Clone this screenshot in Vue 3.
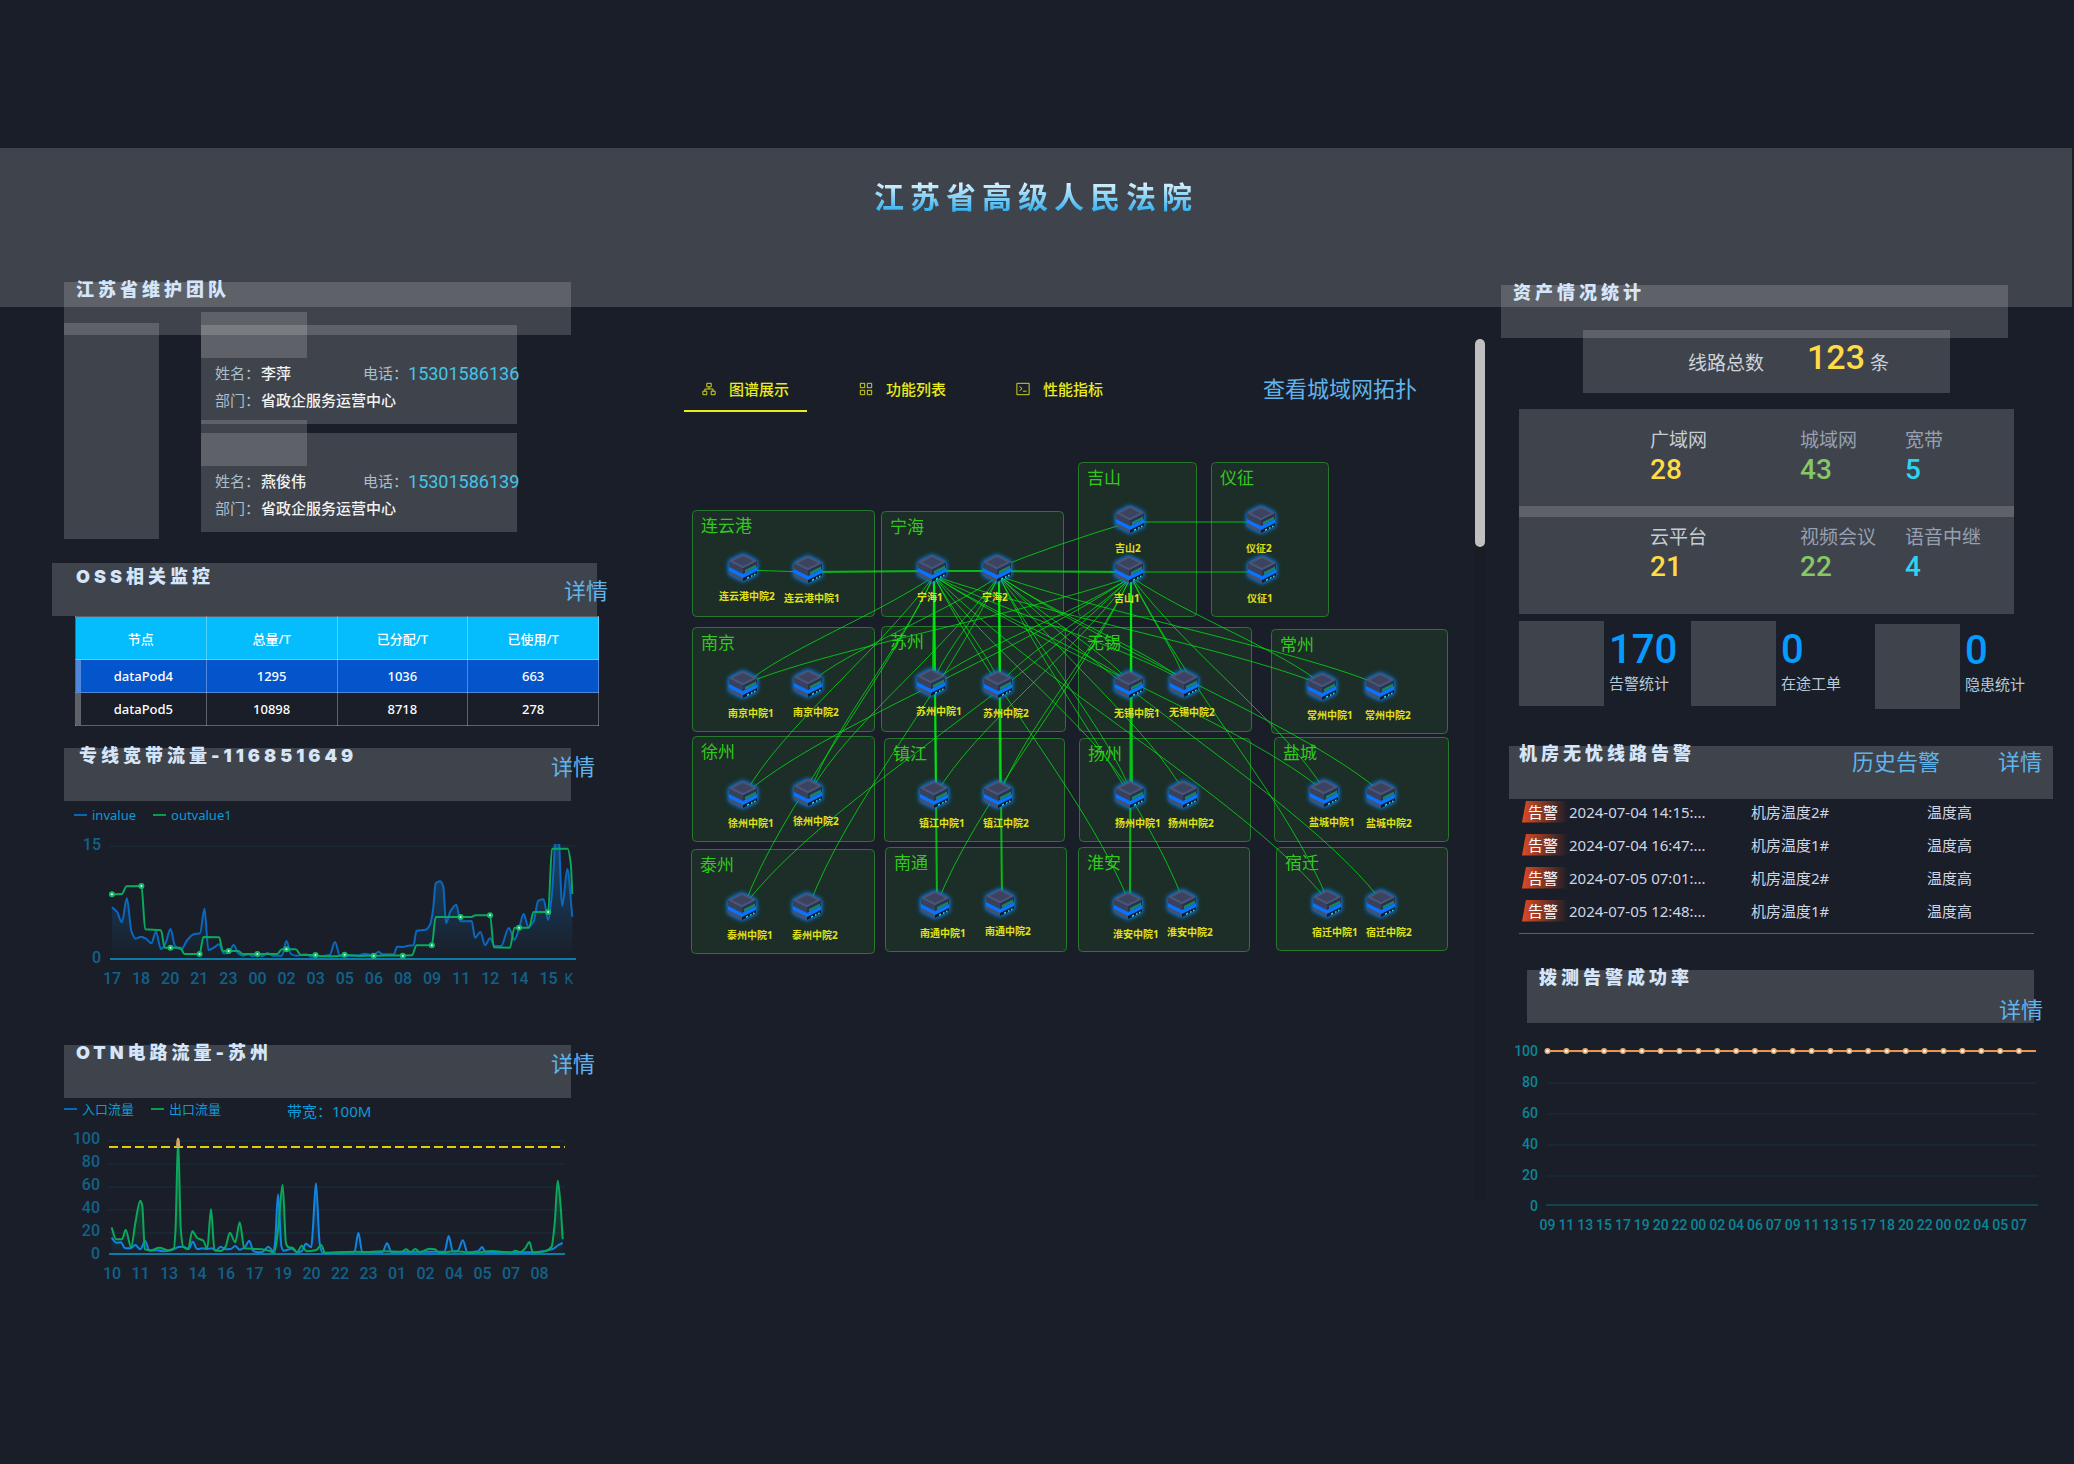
<script setup>
import { ref } from 'vue'

const activeTab = ref('graph')
const tabs = [
  { key: 'graph', label: '图谱展示' },
  { key: 'list', label: '功能列表' },
  { key: 'perf', label: '性能指标' },
]

const members = [
  { name: '李萍', phone: '15301586136', dept: '省政企服务运营中心' },
  { name: '燕俊伟', phone: '15301586139', dept: '省政企服务运营中心' },
]

const pods = [
  ['dataPod4', '1295', '1036', '663'],
  ['dataPod5', '10898', '8718', '278'],
]

const assets = [
  [
    { label: '广域网', value: 28 },
    { label: '城域网', value: 43 },
    { label: '宽带', value: 5 },
  ],
  [
    { label: '云平台', value: 21 },
    { label: '视频会议', value: 22 },
    { label: '语音中继', value: 4 },
  ],
]

const counters = [
  { label: '告警统计', value: 170 },
  { label: '在途工单', value: 0 },
  { label: '隐患统计', value: 0 },
]

const alarms = [
  { time: '2024-07-04 14:15:...', device: '机房温度2#', reason: '温度高' },
  { time: '2024-07-04 16:47:...', device: '机房温度1#', reason: '温度高' },
  { time: '2024-07-05 07:01:...', device: '机房温度2#', reason: '温度高' },
  { time: '2024-07-05 12:48:...', device: '机房温度1#', reason: '温度高' },
]

/* ---------- charts ---------- */

// Monotone cubic interpolation through the points
function smooth(pts) {
  const n = pts.length
  const d = []
  for (let i = 0; i < n - 1; i++) {
    d.push((pts[i + 1][1] - pts[i][1]) / (pts[i + 1][0] - pts[i][0]))
  }
  const m = pts.map((_, i) => {
    if (i === 0) return d[0]
    if (i === n - 1) return d[n - 2]
    if (d[i - 1] * d[i] <= 0) return 0
    return (2 * d[i - 1] * d[i]) / (d[i - 1] + d[i])
  })
  let path = `M${pts[0][0].toFixed(1)},${pts[0][1].toFixed(1)}`
  for (let i = 0; i < n - 1; i++) {
    const h = (pts[i + 1][0] - pts[i][0]) / 3
    const c = [
      pts[i][0] + h, pts[i][1] + m[i] * h,
      pts[i + 1][0] - h, pts[i + 1][1] - m[i + 1] * h,
      pts[i + 1][0], pts[i + 1][1],
    ]
    path += 'C' + c.map((v) => v.toFixed(1)).join(',')
  }
  return path
}

const KX = 2.6133
const place = (pts, dx, dy) => pts.map(([x, y]) => [x / KX + dx, y / 3 + dy])
const area = (path, pts, base) =>
  `${path}L${pts[pts.length - 1][0].toFixed(1)},${base}L${pts[0][0].toFixed(1)},${base}Z`

const inRaw = [[188,322],[201,335],[214,367],[227,295],[239,395],[250,416],[264,410],[278,417],[291,430],[303,395],[316,447],[328,430],[341,387],[353,438],[369,448],[385,420],[403,402],[418,400],[430,326],[440,450],[455,442],[468,433],[480,460],[493,458],[506,435],[518,460],[530,467],[545,463],[556,469],[568,462],[582,469],[594,459],[610,467],[632,467],[644,423],[656,462],[670,467],[695,463],[708,470],[722,469],[757,465],[771,426],[784,468],[800,468],[835,466],[848,461],[862,464],[872,465],[885,455],[895,463],[925,463],[933,440],[948,441],[962,437],[976,436],[984,392],[1008,389],[1020,372],[1027,330],[1034,250],[1046,244],[1054,260],[1061,370],[1072,335],[1088,314],[1099,364],[1128,363],[1137,413],[1151,396],[1163,436],[1176,415],[1188,438],[1205,438],[1225,384],[1240,419],[1252,385],[1264,342],[1276,380],[1290,365],[1302,302],[1316,298],[1328,360],[1338,280],[1352,40],[1365,318],[1378,207],[1391,350]]
const outRaw = [[188,283],[214,282],[226,259],[265,258],[275,388],[316,391],[326,443],[366,443],[378,462],[417,462],[427,411],[468,412],[478,453],[518,453],[530,462],[620,462],[632,448],[668,448],[682,465],[720,465],[735,469],[775,469],[796,464],[835,468],[875,467],[972,466],[984,436],[1024,436],[1034,351],[1127,351],[1138,346],[1176,346],[1186,442],[1228,443],[1240,383],[1278,383],[1290,336],[1328,336],[1338,146],[1379,146],[1387,190],[1391,282]]
const markRaw = [[188,283],[265,258],[341,443],[417,462],[493,453],[568,462],[644,448],[720,465],[796,464],[872,467],[948,467],[1024,436],[1099,351],[1176,346],[1252,383],[1328,336]]

const inPts = place(inRaw, -12, -22)
const outPts = place(outRaw, -12, -22)
const lineMarks = place(markRaw, -12, -22)
const inPath = smooth(inPts)
const outPath = smooth(outPts)
const lineHours = ['17','18','20','21','23','00','02','03','05','06','08','09','11','12','14','15']

const otnInRaw = [[187,623],[200,638],[212,637],[222,655],[237,655],[249,645],[262,658],[275,633],[286,662],[305,661],[322,664],[345,660],[362,651],[376,650],[388,658],[399,635],[411,657],[425,655],[437,657],[449,655],[460,662],[472,650],[485,658],[500,656],[510,648],[522,659],[535,652],[547,632],[558,664],[580,667],[597,650],[610,664],[614,640],[622,493],[631,650],[637,662],[658,656],[672,667],[684,664],[695,641],[709,652],[713,600],[721,460],[731,640],[738,668],[760,668],[822,665],[832,608],[842,665],[895,666],[907,640],[918,666],[1030,665],[1057,665],[1068,618],[1079,665],[1092,662],[1105,631],[1117,667],[1145,664],[1155,651],[1165,667],[1260,667],[1300,666],[1340,657],[1355,645],[1366,639]]
const otnOutRaw = [[187,592],[199,628],[214,628],[224,600],[238,652],[249,580],[262,512],[267,525],[274,658],[290,661],[312,653],[335,661],[350,655],[354,600],[361,328],[368,600],[374,650],[387,657],[398,604],[411,624],[427,632],[437,657],[447,538],[456,660],[472,663],[485,650],[496,608],[510,637],[522,577],[534,655],[560,657],[580,658],[600,663],[612,668],[622,600],[634,464],[643,640],[650,652],[660,653],[672,667],[684,647],[696,664],[722,660],[735,645],[745,669],[820,665],[840,666],[900,664],[945,665],[957,658],[968,667],[981,657],[993,667],[1018,656],[1032,658],[1045,669],[1080,664],[1105,665],[1120,669],[1145,667],[1180,663],[1230,668],[1242,662],[1255,667],[1268,655],[1279,636],[1288,668],[1320,664],[1337,650],[1345,580],[1353,452],[1360,520],[1366,628]]
const otnInPts = place(otnInRaw, -12, -86)
const otnOutPts = place(otnOutRaw, -12, -86)
const otnIn = smooth(otnInPts)
const otnOut = smooth(otnOutPts)
const otnHours = ['10','11','13','14','16','17','19','20','22','23','01','02','04','05','07','08']

const probeHours = ['09','11','13','15','17','19','20','22','00','02','04','06','07','09','11','13','15','17','18','20','22','00','02','04','05','07']
const levels = [100, 80, 60, 40, 20, 0]

/* ---------- topology ---------- */

const groups = [
  ['连云港', 8, 98, 183, 107], ['宁海', 197, 99, 183, 106], ['吉山', 394, 50, 119, 155], ['仪征', 527, 50, 118, 155],
  ['南京', 8, 215, 183, 105], ['苏州', 197, 214, 185, 106], ['无锡', 394, 215, 174, 105], ['常州', 587, 217, 177, 105],
  ['徐州', 8, 324, 183, 106], ['镇江', 200, 326, 181, 104], ['扬州', 395, 326, 172, 104], ['盐城', 590, 325, 175, 105],
  ['泰州', 7, 437, 184, 105], ['南通', 201, 435, 182, 105], ['淮安', 394, 435, 172, 105], ['宿迁', 592, 435, 172, 104],
]

const nodes = {
  连云港中院2: [59, 155], 连云港中院1: [124, 157], 宁海1: [248, 156], 宁海2: [313, 156],
  吉山2: [446, 107], 吉山1: [445, 157], 仪征2: [577, 107], 仪征1: [578, 157],
  南京中院1: [59, 272], 南京中院2: [124, 271], 苏州中院1: [247, 270], 苏州中院2: [314, 272],
  无锡中院1: [445, 272], 无锡中院2: [500, 271], 常州中院1: [638, 274], 常州中院2: [696, 274],
  徐州中院1: [59, 382], 徐州中院2: [124, 380], 镇江中院1: [250, 382], 镇江中院2: [314, 382],
  扬州中院1: [446, 382], 扬州中院2: [499, 382], 盐城中院1: [640, 381], 盐城中院2: [697, 382],
  泰州中院1: [58, 494], 泰州中院2: [123, 494], 南通中院1: [251, 492], 南通中院2: [316, 490],
  淮安中院1: [444, 493], 淮安中院2: [498, 491], 宿迁中院1: [643, 491], 宿迁中院2: [697, 491],
}
const nodeList = Object.entries(nodes).map(([name, [x, y]]) => ({
  name, x, y, lx: x - (name.startsWith('连云港') ? 24 : 15),
}))

const straight = [
  ['连云港中院2', '连云港中院1', 1], ['连云港中院1', '宁海1', 2], ['宁海1', '宁海2', 2],
  ['宁海2', '吉山1', 2], ['吉山2', '仪征2', 1], ['吉山1', '仪征1', 1],
]
const fan = {
  宁海1: ['南京中院1', '徐州中院1', '徐州中院2', '泰州中院1', '苏州中院1', '苏州中院2', '镇江中院1', '南通中院1', '无锡中院1', '无锡中院2', '常州中院1', '扬州中院1', '盐城中院1', '宿迁中院1', '淮安中院1'],
  宁海2: ['南京中院2', '徐州中院2', '泰州中院2', '苏州中院1', '苏州中院2', '镇江中院2', '南通中院2', '无锡中院1', '无锡中院2', '常州中院2', '扬州中院1', '扬州中院2', '盐城中院2', '宿迁中院2', '淮安中院2'],
  吉山1: ['南京中院1', '苏州中院1', '苏州中院2', '徐州中院1', '泰州中院1', '镇江中院1', '镇江中院2', '南通中院1', '无锡中院1', '无锡中院2', '常州中院1', '扬州中院1', '盐城中院1', '宿迁中院1', '淮安中院1'],
}
function bend(a, b) {
  const [x1, y1] = [a[0] + 2, a[1] + 8]
  const [x2, y2] = [b[0] + 2, b[1]]
  const dx = x2 - x1
  const dy = y2 - y1
  const r = (v) => Math.round(v)
  return `M${x1},${y1}C${r(x1 + dx * 0.3)},${r(y1 + dy * 0.36)} ${r(x2 - dx * 0.2)},${r(y2 - dy * 0.31)} ${x2},${y2}`
}
const links = Object.entries(fan).flatMap(([from, list]) =>
  list.map((to) => ({
    id: from + to,
    d: bend(nodes[from], nodes[to]),
    w: Math.abs(nodes[from][0] - nodes[to][0]) < 6 ? 2 : 1,
  })),
)
</script>

<template>
  <div class="page">
    <header class="banner">
      <h1>江苏省高级人民法院</h1>
    </header>

    <main class="board">
      <div class="col left">
        <section>
          <div class="head inset"><h2>江苏省维护团队</h2></div>
          <div class="team">
            <div class="photos"><i></i><i></i></div>
            <div class="cards">
              <article v-for="m in members" :key="m.phone" class="card">
                <span class="tag"></span>
                <div class="info">
                  <p>姓名：<b>{{ m.name }}</b></p>
                  <p>电话：<em>{{ m.phone }}</em></p>
                </div>
                <div class="info"><p>部门：<b>{{ m.dept }}</b></p></div>
              </article>
            </div>
          </div>
        </section>

        <section class="oss">
          <div class="head"><h2>OSS相关监控</h2><a href="#oss">详情</a></div>
          <table>
            <thead>
              <tr><th>节点</th><th>总量/T</th><th>已分配/T</th><th>已使用/T</th></tr>
            </thead>
            <tbody>
              <tr v-for="row in pods" :key="row[0]"><td v-for="c in row" :key="c">{{ c }}</td></tr>
            </tbody>
          </table>
        </section>

        <section class="flow">
          <div class="head inset"><h2>专线宽带流量-116851649</h2><a href="#flow">详情</a></div>
          <div class="legend wide">
            <span class="key in">invalue</span><span class="key out">outvalue1</span>
          </div>
          <svg class="chart" viewBox="0 0 560 168">
            <defs>
              <linearGradient id="fillBlue" x1="0" y1="0" x2="0" y2="1">
                <stop offset="0" stop-color="#0f86e0" stop-opacity=".5" />
                <stop offset="1" stop-color="#0f86e0" stop-opacity="0" />
              </linearGradient>
              <clipPath id="plotClip"><rect x="50" y="22" width="480" height="118" /></clipPath>
            </defs>
            <line class="grid" x1="58" x2="523" y1="24" y2="24" />
            <g clip-path="url(#plotClip)">
              <path :d="area(inPath, inPts, 137)" fill="url(#fillBlue)" />
              <path :d="inPath" class="curve blue" />
              <path :d="outPath" class="curve green" />
            </g>
            <line class="axis" x1="58" x2="524" y1="137" y2="137" />
            <g v-for="(p, i) in lineMarks" :key="i">
              <circle :cx="p[0]" :cy="p[1]" r="3" fill="#12b968" />
              <circle :cx="p[0]" :cy="p[1]" r="1" fill="#eafff2" />
            </g>
            <g class="ticks">
              <text x="49" y="28" text-anchor="end">15</text>
              <text x="49" y="141" text-anchor="end">0</text>
              <text v-for="(h, i) in lineHours" :key="i" :x="60 + i * 29.1" y="162" text-anchor="middle">{{ h }}</text>
              <text x="517" y="162" text-anchor="middle" class="unit">K</text>
            </g>
          </svg>
        </section>

        <section class="otn">
          <div class="head inset"><h2>OTN电路流量-苏州</h2><a href="#otn">详情</a></div>
          <div class="legend">
            <span class="key in">入口流量</span><span class="key out">出口流量</span>
            <span class="bandwidth">带宽：100M</span>
          </div>
          <svg class="chart" viewBox="0 0 560 170">
            <defs>
              <clipPath id="overClip"><rect x="50" y="20" width="480" height="11" /></clipPath>
              <linearGradient id="fillGreen" x1="0" y1="0" x2="0" y2="1">
                <stop offset="0" stop-color="#0aa85c" stop-opacity=".6" />
                <stop offset="1" stop-color="#0aa85c" stop-opacity="0" />
              </linearGradient>
            </defs>
            <line v-for="i in 5" :key="i" class="grid" x1="57" x2="513" :y1="2 + i * 23" :y2="2 + i * 23" />
            <line class="axis" x1="57" x2="513" y1="138" y2="138" />
            <path :d="area(otnIn, otnInPts, 138)" fill="url(#fillBlue)" />
            <path :d="area(otnOut, otnOutPts, 138)" fill="url(#fillGreen)" />
            <path :d="otnIn" class="curve bright" />
            <path :d="otnOut" class="curve green" />
            <line x1="57" x2="513" y1="31" y2="31" stroke="#e6cb0a" stroke-width="2" stroke-dasharray="9 4" />
            <path :d="otnOut" clip-path="url(#overClip)" fill="none" stroke="#d9a566" stroke-width="3" />
            <g class="ticks">
              <text v-for="(l, i) in levels" :key="l" x="48" :y="28 + i * 23" text-anchor="end">{{ l }}</text>
              <text v-for="(h, i) in otnHours" :key="i" :x="60 + i * 28.5" y="163" text-anchor="middle">{{ h }}</text>
            </g>
          </svg>
        </section>
      </div>

      <div class="col center">
        <div class="pane">
          <nav class="tabs">
            <button v-for="t in tabs" :key="t.key" type="button" :class="{ on: activeTab === t.key }" @click="activeTab = t.key">
              <svg v-if="t.key === 'graph'" viewBox="0 0 16 16"><path d="M5.500 1.500h5v4h-5zM1 10.500h4.500v4H1zM10.500 10.500H15v4h-4.500zM8 5.500V8M3.300 10.500V8h9.400v2.500" /></svg>
              <svg v-else-if="t.key === 'list'" viewBox="0 0 16 16"><path d="M1.500 1.500h5v5h-5zM9.500 1.500h5v5h-5zM1.500 9.500h5v5h-5zM9.500 9.500h5v5h-5z" /></svg>
              <svg v-else viewBox="0 0 16 16"><path d="M1 1.500h14v13H1zM4 5l3 2.500L4 10M8 10.500h4" /></svg>
              {{ t.label }}
            </button>
            <a href="#topology">查看城域网拓扑</a>
          </nav>

          <svg class="topology" viewBox="0 0 791 560">
            <defs>
              <symbol id="server" viewBox="-16 -15 32 30" overflow="visible">
                <path d="M-14-6 0 1V8L-14 1Z" fill="#3a4059" />
                <path d="M14-6 0 1V8L14 1Z" fill="#2c3149" />
                <path d="M0-13 14-6 0 1-14-6Z" fill="#4d5472" />
                <path d="M0-11 10-6 0-1-10-6Z" fill="#3c4360" />
                <path d="M2 3 13-2.500v3L2 6Z" fill="#178463" />
                <path d="M-14 0 0 7 14 0V4L0 11-14 4Z" fill="#0873ff" />
                <path d="M-14 4 0 11V14L-14 7Z" fill="#4a4f66" />
                <path d="M0 11 14 4V7L0 14Z" fill="#0f1a2c" />
                <path d="M4 10.500l2-1v1.500l-2 1zM8 8.500l1.500-.8v1.600l-1.500.7zM11 7l1.500-.8v1.500L11 8.500z" fill="#35e0d8" />
              </symbol>
            </defs>
            <g v-for="g in groups" :key="g[0]">
              <rect class="zone" :x="g[1] + 0.5" :y="g[2] + 0.5" :width="g[3] - 1" :height="g[4] - 1" rx="4" />
              <text class="zone-name" :x="g[1] + 9" :y="g[2] + 22">{{ g[0] }}</text>
            </g>
            <line
              v-for="s in straight" :key="s[0] + s[1]" class="link"
              :x1="nodes[s[0]][0]" :y1="nodes[s[0]][1] + 3" :x2="nodes[s[1]][0]" :y2="nodes[s[1]][1] + 3" :stroke-width="s[2]"
            />
            <path class="link" d="M313,156Q370,133 446,110" stroke-width="1" />
            <path v-for="l in links" :key="l.id" class="link" :d="l.d" :stroke-width="l.w" />
            <g v-for="n in nodeList" :key="n.name">
              <use class="server" href="#server" :x="n.x - 16" :y="n.y - 15" width="32" height="30" />
              <text class="node-name" :x="n.lx" :y="n.y + 33">{{ n.name }}</text>
            </g>
          </svg>
        </div>
        <div class="track"><i></i></div>
      </div>

      <div class="col right">
        <section>
          <div class="head"><h2>资产情况统计</h2></div>
          <div class="total">线路总数<strong>123</strong>条</div>
          <div class="assets">
            <dl v-for="(row, i) in assets" :key="i">
              <div v-for="a in row" :key="a.label"><dt>{{ a.label }}</dt><dd>{{ a.value }}</dd></div>
            </dl>
          </div>
          <div class="counters">
            <div v-for="c in counters" :key="c.label" class="counter">
              <i></i>
              <p><strong>{{ c.value }}</strong>{{ c.label }}</p>
            </div>
          </div>
        </section>

        <section class="alarm">
          <div class="head">
            <h2>机房无忧线路告警</h2>
            <a href="#history" class="history">历史告警</a><a href="#alarm">详情</a>
          </div>
          <ul>
            <li v-for="a in alarms" :key="a.time">
              <span class="badge">告警</span><span>{{ a.time }}</span><span>{{ a.device }}</span><span>{{ a.reason }}</span>
            </li>
          </ul>
        </section>

        <section class="probe">
          <div class="head"><h2>拨测告警成功率</h2><a href="#probe">详情</a></div>
          <svg class="chart" viewBox="0 0 560 213">
            <line v-for="i in 5" :key="i" class="grid" x1="46" x2="536" :y1="-2 + i * 31" :y2="-2 + i * 31" />
            <line class="axis teal" x1="45" x2="537" y1="182" y2="182" />
            <line x1="46" x2="535" y1="28" y2="28" stroke="#ee9347" stroke-width="2" />
            <g v-for="(h, i) in probeHours" :key="i">
              <circle :cx="46.500 + i * 18.860" cy="28" r="3" fill="#e0ac78" />
              <circle :cx="46.500 + i * 18.860" cy="28" r="1.500" fill="#fff6ea" />
            </g>
            <g class="ticks teal">
              <text v-for="(l, i) in levels" :key="l" x="37" :y="33 + i * 31" text-anchor="end">{{ l }}</text>
              <text v-for="(h, i) in probeHours" :key="i" :x="46.500 + i * 18.860" y="207" text-anchor="middle">{{ h }}</text>
            </g>
          </svg>
        </section>
      </div>
    </main>
  </div>
</template>

<style>
html,
body {
  margin: 0;
  background: #1a1e28;
}
</style>

<style scoped>
.page {
  --veil: rgba(255, 255, 255, 0.165);
  --link: #60b4ec;
  --digits: "Liberation Sans Narrow", Roboto, sans-serif;
  min-height: 100vh;
  box-sizing: border-box;
  padding-top: 148px;
  overflow: hidden;
  background: #1a1e28;
  color: #fff;
  font-family: "Noto Sans", "Noto Sans CJK SC", sans-serif;
  font-size: 15px;
}
h1, h2, p, ul, dl, dd { margin: 0; padding: 0; }
a { color: var(--link); text-decoration: none; font-size: 22px; line-height: 24px; white-space: nowrap; }

.banner {
  height: 159px;
  margin-right: 2px;
  background: var(--veil);
  text-align: center;
}
h1 {
  display: inline-block;
  padding-top: 27px;
  font-size: 30px;
  line-height: 44px;
  font-weight: 700;
  letter-spacing: 6px;
  background: linear-gradient(#fff 40%, #2fb0f0 90%);
  background-clip: text;
  color: transparent;
}

.board {
  display: grid;
  grid-template-columns: 684px minmax(0, 1fr) 573px;
  margin-top: -25px;
}
.left { padding-left: 52px; }

.head {
  display: flex;
  align-items: flex-start;
  width: 507px;
  height: 53px;
  background: var(--veil);
}
.head.inset { margin-left: 12px; }
.head h2 {
  flex: 1;
  margin-top: -1px;
  padding-left: 12px;
  font-family: Inter, "Noto Sans CJK SC", sans-serif;
  font-size: 18px;
  line-height: 18px;
  font-weight: 900;
  letter-spacing: 4px;
  color: #d5e6fb;
  white-space: nowrap;
}
.head a { margin: 6px -24px 0 0; }

.team { display: flex; gap: 42px; margin: -12px 0 0 12px; }
.photos { width: 95px; }
.photos i { display: block; height: 108px; background: var(--veil); }
.cards { display: flex; flex-direction: column; gap: 9px; padding-top: 2px; }
.card {
  display: flex;
  flex-direction: column;
  width: 316px;
  height: 99px;
  background: var(--veil);
}
.tag { width: 106px; height: 46px; margin: -13px 0 2px; background: var(--veil); }
.info {
  display: grid;
  grid-template-columns: 148px auto;
  padding-left: 14px;
  line-height: 27px;
  color: #a9bfca;
  white-space: nowrap;
}
.info p { display: flex; align-items: center; }
.info b { margin-left: 1px; color: #f2f2f2; font-weight: 500; }
.info em { font-family: var(--digits); font-style: normal; font-size: 18px; color: #47c3e6; }

.oss { margin-top: 24px; }
.oss .head { width: 545px; }
.oss h2 { padding: 6px 0 0 24px; }
.oss .head a { margin: 15px -11px 0 0; }
table {
  width: 524px;
  margin-left: 23px;
  border-collapse: collapse;
  table-layout: fixed;
  font-size: 13px;
  text-align: center;
}
th, td { border: 1px solid rgba(255, 255, 255, 0.3); padding: 0; }
th { height: 42px; background: #05bcfd; font-weight: 500; }
td { height: 32px; font-weight: 500; }
td:first-child { box-shadow: inset 5px 0 rgba(255, 255, 255, 0.3); padding-left: 5px; }
tbody tr:first-child { background: #0454cc; }

.flow { margin-top: 22px; }
.flow h2 { padding-left: 15px; }
.otn { margin-top: 55px; }
.legend {
  display: flex;
  gap: 17px;
  padding: 4px 0 0 12px;
  font-size: 13px;
  line-height: 14px;
  color: #0c9ad8;
}
.legend.wide { padding: 7px 0 0 22px; }
.key { display: flex; align-items: center; gap: 5px; }
.key::before { content: ""; width: 13px; height: 2px; background: #0a66b8; }
.key.out::before { background: #0a9a50; }
.bandwidth { margin-left: 49px; font-size: 15px; line-height: 18px; margin-bottom: -4px; }

.chart { display: block; width: 560px; }
.grid { stroke: #17303a; stroke-width: 1; }
.axis { stroke: #0e7ba8; stroke-width: 2; }
.axis.teal { stroke: #10696f; stroke-width: 1; }
.curve { fill: none; stroke-width: 2; }
.curve.blue { stroke: #0b68bf; }
.curve.bright { stroke: #0f86e4; }
.curve.green { stroke: #0aa85c; }
.ticks { font-family: var(--digits); font-size: 16px; font-weight: 500; fill: #11628a; }
.ticks .unit { font-weight: 400; font-size: 14px; }
.ticks.teal { font-size: 14px; fill: #0d8496; }

.center { display: flex; margin-top: 57px; padding-right: 16px; height: 863px; }
.pane { flex: 1; min-width: 0; padding-top: 29px; }
.tabs { display: flex; align-items: center; gap: 34px; padding-right: 58px; }
.tabs button {
  display: flex;
  align-items: center;
  gap: 13px;
  height: 44px;
  padding: 0 18px 1px;
  border: 0;
  border-bottom: 2px solid transparent;
  background: none;
  color: #e8ec1c;
  font: inherit;
  font-weight: 500;
  white-space: nowrap;
}
.tabs button.on { border-color: #e8ec1c; }
.tabs svg { width: 14px; height: 14px; fill: none; stroke: currentColor; stroke-width: 1; }
.tabs a { margin: -4px 0 0 auto; }
.topology { display: block; width: 100%; }
.zone { fill: rgba(35, 90, 40, 0.28); stroke: #26792d; stroke-width: 1; }
.zone-name { font-size: 17px; fill: #33c91c; }
.link { fill: none; stroke: #00f010; stroke-opacity: 0.72; }
.server { filter: drop-shadow(0 0 2px #0a84ff) drop-shadow(0 0 2px rgba(10, 132, 255, 0.5)); }
.node-name { font-size: 10px; font-weight: 700; fill: #e0e21a; }
.track { width: 10px; background: #181c25; border-radius: 5px; }
.track i { display: block; height: 208px; border-radius: 5px; background: #c0c0c0; }

.right { padding-top: 3px; }
.total {
  display: flex;
  align-items: center;
  box-sizing: border-box;
  width: 367px;
  height: 63px;
  margin: -8px 0 0 82px;
  padding-left: 105px;
  background: var(--veil);
  font-size: 19px;
  color: #cdd3dc;
}
.total strong { margin: -10px 5px 0 43px; font: 500 34px/40px var(--digits); color: #ffdc45; }
.assets { margin: 16px 0 0 18px; width: 495px; }
.assets dl {
  display: grid;
  grid-template-columns: 150px 105px auto;
  box-sizing: border-box;
  height: 108px;
  padding: 20px 0 0 131px;
  background: var(--veil);
}
.assets dl + dl { margin-top: -11px; }
.assets dt { font-size: 19px; line-height: 22px; color: #96a0b2; }
.assets dd { font: 500 28px/38px var(--digits); color: #86c768; }
.assets div:first-child dt { color: #c5cdd6; }
.assets div:first-child dd { color: #ffdc45; }
.assets div:last-child dd { color: #2cd4f2; }

.counters { display: grid; grid-template-columns: 172px 184px auto; margin: 7px 0 0 18px; }
.counter { display: flex; gap: 5px; }
.counter:last-child { padding-top: 3px; }
.counter:last-child p { margin-top: -2px; }
.counter i { width: 85px; height: 85px; background: var(--veil); }
.counter p { padding-top: 10px; line-height: 28px; color: #b6cad8; }
.counter strong { display: block; font: 500 40px/38px var(--digits); color: #069cff; }

.alarm { margin-top: 37px; }
.alarm .head { width: 544px; margin-left: 8px; }
.alarm h2 { padding-left: 10px; }
.alarm .head a { margin: 3px 11px 0 0; }
.alarm .head .history { margin-right: 58px; }
ul {
  width: 515px;
  margin: -4px 0 0 18px;
  padding-bottom: 6px;
  border-bottom: 1px solid #5d606a;
  list-style: none;
}
li {
  display: grid;
  grid-template-columns: 47px 182px 176px auto;
  align-items: center;
  height: 33px;
  padding-left: 3px;
  color: #cfd5e2;
}
.badge {
  width: 40px;
  padding-left: 6px;
  line-height: 22px;
  background: linear-gradient(90deg, #e04a22, rgba(224, 74, 34, 0));
  clip-path: polygon(4px 0, 100% 0, 100% 100%, 0 100%);
  color: #fff;
}

.probe { margin-top: 36px; }
.probe .head { margin-left: 26px; }
.probe .head a { margin: 27px -9px 0 0; }
</style>
